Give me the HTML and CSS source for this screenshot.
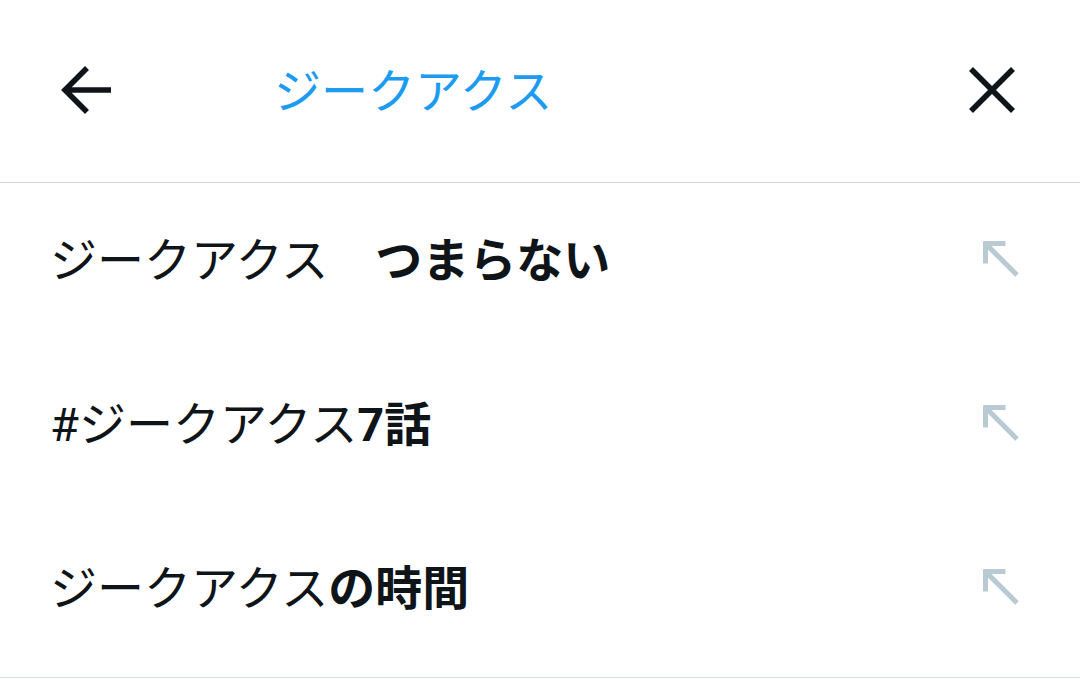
FILE: index.html
```html
<!DOCTYPE html>
<html lang="ja">
<head>
<meta charset="utf-8">
<link rel="stylesheet" href="styles.css">
</head>
<body>
<div class="page">
  <header class="header">
    <button class="icon-btn back" aria-label="戻る">
      <svg viewBox="0 0 52 52" width="52" height="52"><path d="M51 26H7M27 4L5 26l22 22" fill="none" stroke="#0f1419" stroke-width="5.6"/></svg>
    </button>
    <div class="query">ジークアクス</div>
    <button class="icon-btn close" aria-label="閉じる">
      <svg viewBox="0 0 48 48" width="48" height="48"><path d="M3 3l42 42M45 3L3 45" fill="none" stroke="#0f1419" stroke-width="5.6"/></svg>
    </button>
  </header>
  <ul class="list">
    <li class="item"><span class="text"><span class="typed">ジークアクス　</span><b>つまらない</b></span><span class="fill"><svg viewBox="0 0 40 40" width="40" height="40"><path d="M37 37L6 6M3.5 5.5h22M5.5 3.5v22" fill="none" stroke="#b9cad2" stroke-width="5"/></svg></span></li>
    <li class="item"><span class="text"><span class="typed">#ジークアクス</span><b>7話</b></span><span class="fill"><svg viewBox="0 0 40 40" width="40" height="40"><path d="M37 37L6 6M3.5 5.5h22M5.5 3.5v22" fill="none" stroke="#b9cad2" stroke-width="5"/></svg></span></li>
    <li class="item"><span class="text"><span class="typed">ジークアクス</span><b>の時間</b></span><span class="fill"><svg viewBox="0 0 40 40" width="40" height="40"><path d="M37 37L6 6M3.5 5.5h22M5.5 3.5v22" fill="none" stroke="#b9cad2" stroke-width="5"/></svg></span></li>
  </ul>
</div>
</body>
</html>
```

FILE: styles.css
```css
* { box-sizing: border-box; }
html, body { margin: 0; padding: 0; background: #fff; }
body {
  font-family: Roboto, "Noto Sans CJK JP", sans-serif;
  color: #0f1419;
  width: 1080px;
  height: 688px;
  overflow: hidden;
}
.header {
  height: 183px;
  border-bottom: 1px solid #cfd9de;
  display: flex;
  align-items: center;
  padding: 0 62px 0 60px;
}
.icon-btn {
  border: 0;
  background: none;
  padding: 0;
  display: flex;
}
.back { margin-top: -2px; }
.close { margin-left: auto; margin-top: -2px; margin-right: 2px; }
.query {
  margin-left: 162px;
  font-size: 47px;
  color: #1d9bf0;
  line-height: 1;
}
.list { list-style: none; margin: 0; padding: 0 0 2px; border-bottom: 1px solid #d5dde0; }
.item {
  height: 164px;
  display: flex;
  align-items: center;
  padding: 0 60px 10px 50px;
}
.text { font-size: 47px; line-height: 1; }
.typed { font-weight: 400; }
.text b { font-weight: 700; }
.fill { margin-left: auto; display: flex; margin-top: -4px; }
```
